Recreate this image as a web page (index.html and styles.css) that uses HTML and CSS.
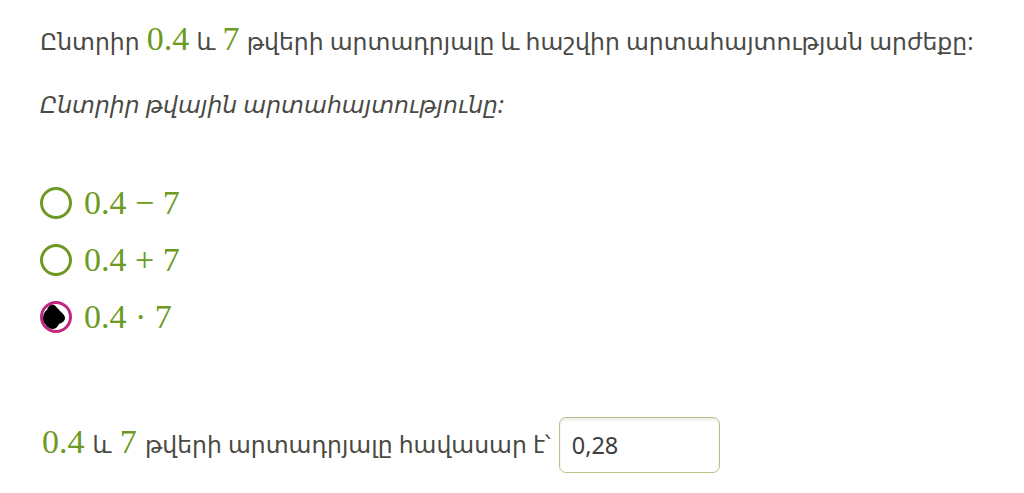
FILE: index.html
```html
<!DOCTYPE html>
<html lang="hy">
<head>
<meta charset="utf-8">
<link rel="stylesheet" href="styles.css">
</head>
<body>
<div class="page">
  <p class="task">Ընտրիր <span class="num">0.4</span> և <span class="num">7</span> թվերի արտադրյալը և հաշվիր արտահայտության արժեքը:</p>
  <p class="sub">Ընտրիր թվային արտահայտությունը:</p>
  <ul class="options">
    <li class="opt"><span class="radio"></span><span class="expr">0.4 − 7</span></li>
    <li class="opt"><span class="radio"></span><span class="expr">0.4 + 7</span></li>
    <li class="opt"><span class="radio checked"><svg viewBox="0 0 32 32" width="32" height="32"><circle cx="16" cy="16" r="14.5" fill="none" stroke="#c2277f" stroke-width="3"/><path d="M3 17 C3 13 5 10 7 9 C8 5 11 3 14 4 C16 5 18 8 20 10 C22 12 25 14 25 17 C25 20 22 22 19 23 C18 25 16 28 13 28 C10 28 7 26 6 24 C4 22 3 20 3 17 Z" fill="#000"/></svg></span><span class="expr">0.4 · 7</span></li>
  </ul>
  <div class="answer">
    <span class="text"><span class="num">0.4</span> և <span class="num">7</span> թվերի արտադրյալը հավասար է՝</span>
    <span class="field">0,28</span>
  </div>
</div>
</body>
</html>
```
FILE: styles.css
```css
html, body {
  margin: 0;
  padding: 0;
  background: #fff;
}
.page {
  padding: 19px 0 0 40px;
  font-family: "Noto Sans", "DejaVu Sans", sans-serif;
  font-size: 23.5px;
  color: #4a4a44;
}
.task {
  margin: 0;
  line-height: 44px;
}
.sub {
  margin: 19px 0 0;
  font-style: italic;
  line-height: 44px;
}
.num {
  font-family: "Liberation Serif", "DejaVu Serif", serif;
  color: #6d9a22;
  font-size: 34px;
  line-height: 1;
}
.task .num {
  margin: 0 1px;
}
.answer .num {
  margin: 0 2px;
}
.options {
  list-style: none;
  margin: 55px 0 0;
  padding: 0;
  display: flex;
  flex-direction: column;
  gap: 13px;
}
.opt {
  display: flex;
  align-items: center;
  gap: 12px;
  height: 44px;
}
.radio {
  width: 32px;
  height: 32px;
  box-sizing: border-box;
  border: 3.5px solid #6d9a22;
  border-radius: 50%;
  flex: none;
}
.radio.checked {
  border: none;
}
.radio svg { display: block; }
.expr {
  font-family: "Liberation Serif", "DejaVu Serif", serif;
  color: #6d9a22;
  font-size: 34px;
}
.answer {
  margin-top: 72px;
  display: flex;
  align-items: center;
  gap: 8px;
}
.field {
  display: inline-flex;
  align-items: center;
  box-sizing: border-box;
  width: 161px;
  height: 56px;
  margin-top: 6px;
  padding-left: 12px;
  border: 1.5px solid #b3c488;
  border-radius: 7px;
  box-shadow: inset 0 2px 3px rgba(0,0,0,0.08);
  color: #3d3d3d;
}
```
